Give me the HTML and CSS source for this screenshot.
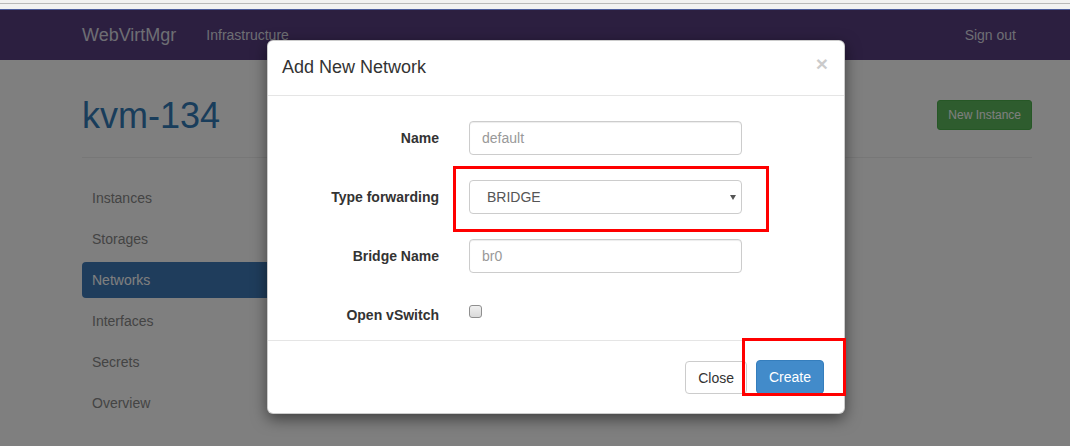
FILE: index.html
```html
<!DOCTYPE html>
<html>
<head>
<meta charset="utf-8">
<title>WebVirtMgr</title>
<link rel="stylesheet" href="styles.css">
</head>
<body>
<div class="chrome"><div class="chrome-line"></div><div class="chrome-blue"></div></div>
<div class="app">
  <nav class="navbar">
    <a class="brand">WebVirtMgr</a>
    <a class="nav-link">Infrastructure</a>
    <span class="spacer"></span>
    <a class="nav-link">Sign out</a>
  </nav>
  <div class="container">
    <div class="page-header">
      <h1 class="title">kvm-134</h1>
      <button class="btn-success">New Instance</button>
    </div>
    <ul class="side-nav">
      <li>Instances</li>
      <li>Storages</li>
      <li class="active">Networks</li>
      <li>Interfaces</li>
      <li>Secrets</li>
      <li>Overview</li>
    </ul>
  </div>
  <div class="backdrop"></div>
  <div class="modal">
    <div class="modal-header">
      <h4 class="modal-title">Add New Network</h4>
      <span class="close">&times;</span>
    </div>
    <div class="modal-body">
      <label class="lbl">Name</label>
      <input class="field" type="text" placeholder="default">
      <label class="lbl">Type forwarding</label>
      <div class="select-wrap"><div class="select">BRIDGE</div></div>
      <label class="lbl">Bridge Name</label>
      <input class="field" type="text" placeholder="br0">
      <label class="lbl lbl-check">Open vSwitch</label>
      <div class="check-cell"><input class="check" type="checkbox"></div>
    </div>
    <div class="modal-footer">
      <button class="btn-default">Close</button>
      <button class="btn-primary">Create</button>
    </div>
    <div class="mark mark-select"></div>
    <div class="mark mark-create"></div>
  </div>
</div>
</body>
</html>
```
FILE: styles.css
```css
* { box-sizing: border-box; }
html, body { margin: 0; padding: 0; }
body {
  font-family: "Liberation Sans", Arial, sans-serif;
  font-size: 14px;
  color: #333;
  background: #fff;
  width: 1070px;
  height: 446px;
  overflow: hidden;
}
.chrome {
  height: 10px;
  background: #f1f1f1;
  padding-top: 3px;
}
.chrome-line { height: 1px; background: #b8b8b8; }
.chrome-blue { height: 1px; background: #4c5c9c; margin-top: 5px; }

.app {
  position: relative;
  height: 436px;
}
.navbar {
  height: 50px;
  background: #583f80;
  display: flex;
  align-items: center;
  padding: 0 54px 0 82px;
}
.brand {
  font-size: 18px;
  color: #dcdce6;
  margin-right: 30px;
}
.nav-link {
  font-size: 14px;
  color: #dcdce6;
}
.spacer { flex: 1; }

.container {
  padding: 0 38px 0 82px;
}
.page-header {
  display: flex;
  justify-content: space-between;
  align-items: flex-start;
  border-bottom: 1px solid #eee;
  height: 98px;
}
.title {
  margin: 36px 0 0 0;
  font-size: 36px;
  font-weight: 400;
  line-height: 40px;
  color: #337ab7;
}
.btn-success {
  margin-top: 40px;
  height: 30px;
  padding: 0 10px;
  font-family: inherit;
  font-size: 12px;
  color: #fff;
  background: #5cb85c;
  border: 1px solid #4cae4c;
  border-radius: 3px;
}
.side-nav {
  list-style: none;
  margin: 22px 0 0 0;
  padding: 0;
  width: 240px;
  display: flex;
  flex-direction: column;
  gap: 5px;
}
.side-nav li {
  height: 36px;
  line-height: 36px;
  padding-left: 10px;
  border-radius: 4px;
  color: #888;
  font-size: 14px;
}
.side-nav li.active {
  background: #3f7ab8;
  color: #fff;
}

.backdrop {
  position: absolute;
  inset: 0;
  background: rgba(0, 0, 0, 0.5);
}

.modal {
  position: absolute;
  left: 267px;
  top: 30px;
  width: 578px;
  background: #fff;
  border: 1px solid rgba(0, 0, 0, 0.2);
  border-radius: 6px;
  box-shadow: 0 5px 15px rgba(0, 0, 0, 0.5);
}
.modal-header {
  display: flex;
  justify-content: space-between;
  align-items: center;
  padding: 13px 15px 15px 14px;
  border-bottom: 1px solid #e5e5e5;
}
.modal-title {
  margin: 0;
  font-size: 18px;
  font-weight: 400;
  line-height: 26px;
  color: #333;
}
.close {
  font-size: 21px;
  font-weight: 700;
  line-height: 1;
  color: #000;
  opacity: 0.2;
  margin-right: 1px;
  margin-top: -8px;
}
.modal-body {
  display: grid;
  grid-template-columns: 157px 273px;
  column-gap: 30px;
  row-gap: 25px;
  padding: 25px 15px 8px 14px;
}
.lbl {
  text-align: right;
  font-weight: 700;
  font-size: 14px;
  line-height: 20px;
  padding-top: 7px;
  color: #333;
}
.field {
  height: 34px;
  width: 273px;
  padding: 6px 12px;
  font-family: inherit;
  font-size: 14px;
  color: #555;
  border: 1px solid #ccc;
  border-radius: 4px;
  box-shadow: inset 0 1px 1px rgba(0, 0, 0, 0.075);
  outline: none;
}
.field::placeholder { color: #999; }
.select-wrap {
  position: relative;
}
.select {
  height: 34px;
  padding: 0 17px;
  line-height: 32px;
  font-size: 14px;
  color: #555;
  border: 1px solid #ccc;
  border-radius: 4px;
}
.select-wrap::after {
  content: "";
  position: absolute;
  right: 6px;
  top: 15px;
  border-left: 3px solid transparent;
  border-right: 3px solid transparent;
  border-top: 5px solid #555;
}
.check-cell {
  height: 34px;
  padding-top: 7px;
}
.check {
  appearance: none;
  -webkit-appearance: none;
  display: block;
  margin: 0;
  width: 13px;
  height: 13px;
  border: 1px solid #8f8f8f;
  border-radius: 3px;
  background: linear-gradient(#f0f0f0, #dadada);
}
.modal-footer {
  display: flex;
  justify-content: flex-end;
  gap: 9px;
  padding: 19px 20px 19px;
  border-top: 1px solid #e5e5e5;
}
.btn-default, .btn-primary {
  height: 34px;
  padding: 0 12px;
  font-family: inherit;
  font-size: 14px;
  border-radius: 4px;
  border: 1px solid;
}
.btn-default {
  margin-top: 1px;
  height: 33px;
  background: #fff;
  color: #333;
  border-color: #ccc;
}
.btn-primary {
  background: #428bca;
  border-color: #357ebd;
  color: #fff;
  padding: 0 12px;
}
.mark {
  position: absolute;
  border: 3px solid #ff0000;
}
.mark-select {
  left: 185px;
  top: 125px;
  width: 316px;
  height: 66px;
}
.mark-create {
  left: 474px;
  top: 297px;
  width: 104px;
  height: 58px;
}
```
